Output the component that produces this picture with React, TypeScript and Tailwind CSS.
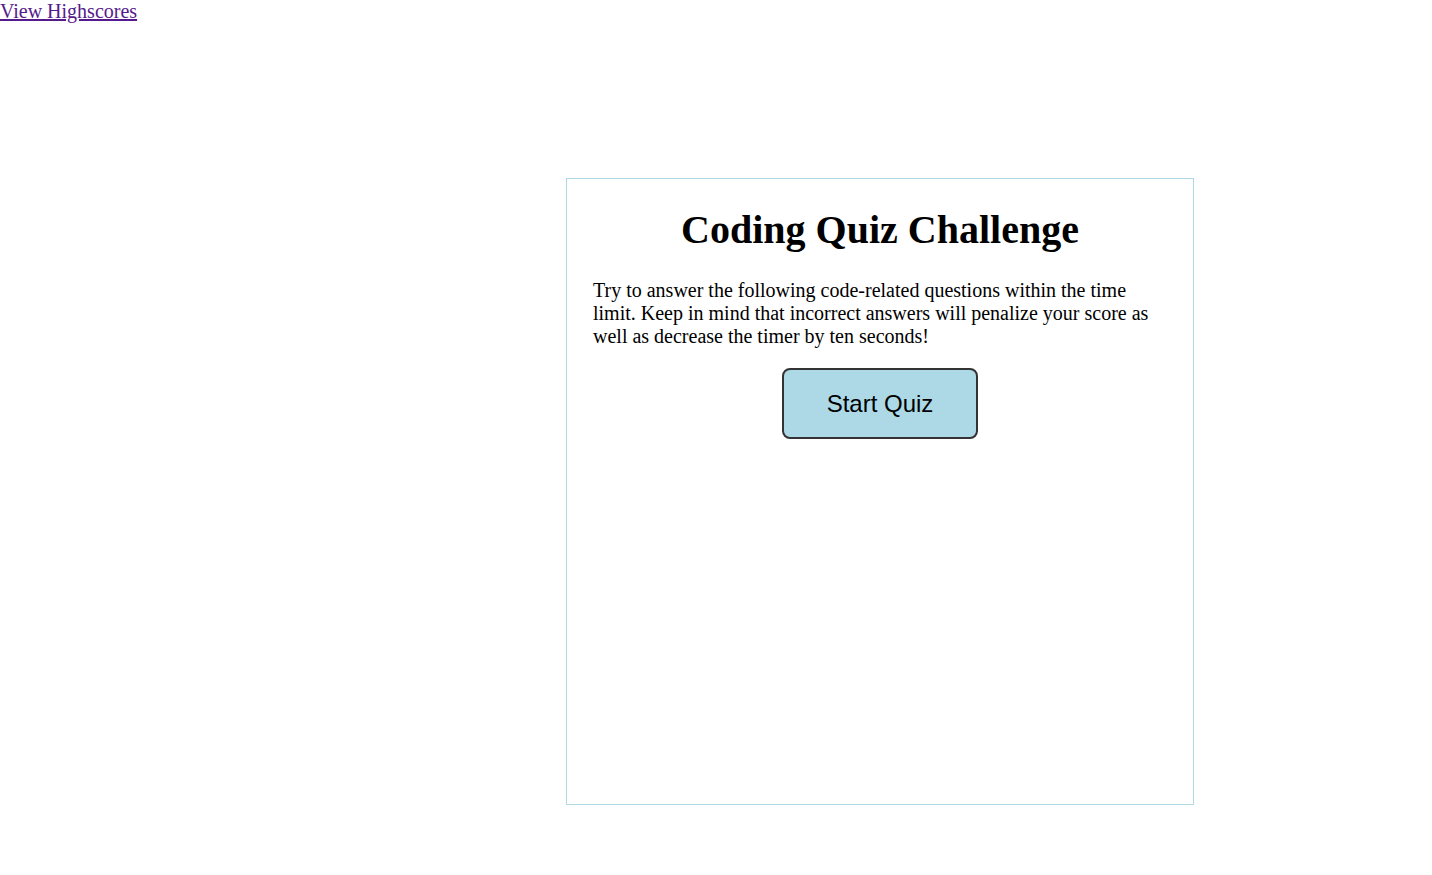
export default function App() {
  return (
    <div className="min-h-screen bg-white text-black font-['Liberation_Serif',serif]">
      <header className="text-[20px] leading-[23px]">
        <a href="#" className="text-[#551a8b] underline">
          View Highscores
        </a>
      </header>
      <main className="pl-[566px] pt-[155px]">
        <section className="w-[628px] h-[627px] border border-[#add8e6] px-[26px] pt-[28px]">
          <h1 className="text-center text-[40px] leading-[46px] font-bold">
            Coding Quiz Challenge
          </h1>
          <p className="mt-[26px] text-[20px] leading-[23px]">
            Try to answer the following code-related questions within the time limit. Keep in mind
            that incorrect answers will penalize your score as well as decrease the timer by ten
            seconds!
          </p>
          <div className="flex justify-center mt-[20px]">
            <button className="w-[196px] h-[71px] bg-[#add8e6] border-2 border-[#333] rounded-[8px] font-['Liberation_Sans',Arial,sans-serif] text-[24px]">
              Start Quiz
            </button>
          </div>
        </section>
      </main>
    </div>
  );
}
